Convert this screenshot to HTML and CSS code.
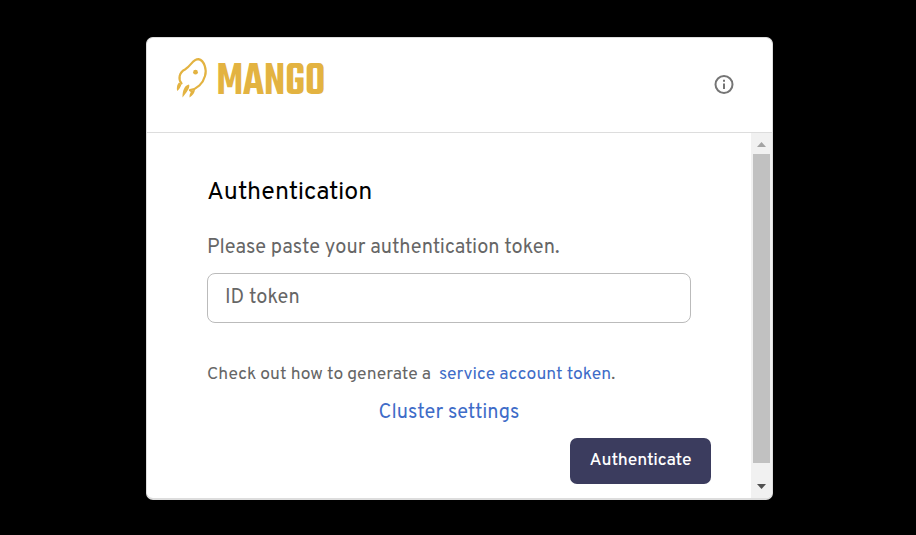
FILE: index.html
```html
<!DOCTYPE html>
<html lang="en">
<head>
<meta charset="utf-8">
<title>Mango authentication</title>
<link rel="stylesheet" href="styles.css">
</head>
<body>
<main class="dialog">
  <header class="header">
    <svg class="logo" width="150" height="44" viewBox="0 0 150 44" role="img" aria-label="Mango">
      <path class="body" d="M5.500 27.500C2 23 3 16.500 9 13.500C16 9 16.500 3.200 22.500 3.200C28.500 4.500 31 14 29 20C27 27.500 21 33 14 34.200"/>
      <circle class="fill" cx="19.500" cy="16.200" r="2.400"/>
      <path class="fill" d="M13 28.500C14 30.500 13 34 6.500 41.500C6.300 34 9 29 13 28.500ZM3 26.500C4.500 27.500 5.500 28.500 5 29.800C4 32 3 34 1 35C.5 31 1.300 28 3 26.500ZM14 35L19 33.700C18.500 37 17 39 13.500 41.500C13.500 39 13.800 37.500 14.700 36.700Z"/>
      <text class="wordmark" x="40.500" y="37.500" textLength="109" lengthAdjust="spacingAndGlyphs">MANGO</text>
    </svg>
    <svg class="info" width="20" height="20" viewBox="0 0 20 20" aria-label="Information">
      <circle cx="10" cy="10.500" r="8.500"/>
      <path d="M10 9.500v5.500M10 5.700v2"/>
    </svg>
  </header>
  <div class="body-row">
    <section class="content">
      <h1>Authentication</h1>
      <p class="intro">Please paste your authentication token.</p>
      <div class="field">ID token</div>
      <p class="hint"><span class="hint-text">Check out how to generate a</span><a class="hint-link">service account token</a>.</p>
      <a class="cluster">Cluster settings</a>
      <button class="submit">Authenticate</button>
    </section>
    <div class="scrollbar">
      <svg width="9" height="5" viewBox="0 0 9 5"><path fill="#a3a3a3" d="M0 5 4.500 0 9 5Z"/></svg>
      <div class="thumb"></div>
      <svg width="9" height="5" viewBox="0 0 9 5"><path fill="#505050" d="M0 0 4.500 5 9 0Z"/></svg>
    </div>
  </div>
</main>
</body>
</html>
```
FILE: styles.css
```css
* { box-sizing: border-box; }
body {
  margin: 0;
  height: 535px;
  padding: 37px 0 0 146px;
  background: #000;
  font-family: Overpass, Roboto, sans-serif;
  color: #666;
}
.dialog {
  width: 627px;
  height: 463px;
  display: flex;
  flex-direction: column;
  background: #fff;
  border: 1px solid #ddd;
  border-bottom-width: 2px;
  border-radius: 7px;
  overflow: hidden;
}
.header {
  height: 95px;
  flex: none;
  display: flex;
  justify-content: space-between;
  padding: 18px 38px 0 29px;
  border-bottom: 1px solid #ddd;
}
.logo { overflow: visible; }
.logo .body { fill: none; stroke: #e3b341; stroke-width: 2.200; stroke-linecap: round; }
.logo .fill { fill: #e3b341; }
.wordmark { fill: #e3b341; font-family: Teko, Rajdhani, Overpass, sans-serif; font-size: 48px; font-weight: 600; }
.info { margin-top: 18px; fill: none; stroke: #757575; stroke-width: 2; }
.body-row { flex: 1; display: flex; min-height: 0; }
.content { flex: 1; display: flex; flex-direction: column; padding: 45px 40px 0 60px; }
h1, p { margin: 0; white-space: nowrap; }
h1 { color: #000; font-size: 25px; line-height: 30px; font-weight: 400; }
.intro { margin-top: 28px; font-size: 20px; line-height: 24px; }
.field {
  width: 484px;
  height: 50px;
  margin-top: 13px;
  padding: 12px 17px;
  border: 1px solid #bbb;
  border-radius: 8px;
  font-size: 20px;
  line-height: 24px;
}
.hint { margin-top: 41px; font-size: 17.500px; line-height: 22px; }
.hint-text { margin-right: 8px; }
.hint-link, .cluster { color: #3e6cc8; }
.cluster { width: 484px; margin-top: 15px; text-align: center; font-size: 20px; line-height: 24px; }
.submit {
  align-self: flex-end;
  width: 141px;
  height: 46px;
  margin-top: 13px;
  padding: 0;
  border: 0;
  border-radius: 7px;
  background: #3b3c5e;
  color: #fff;
  font: 500 17.500px Overpass, Roboto, sans-serif;
  letter-spacing: -.1px;
}
.scrollbar {
  width: 21px;
  display: flex;
  flex-direction: column;
  align-items: center;
  background: #f1f1f1;
  padding-top: 9px;
}
.thumb { width: 17px; height: 309px; margin: 7px 0 21px; background: #c1c1c1; }
```
